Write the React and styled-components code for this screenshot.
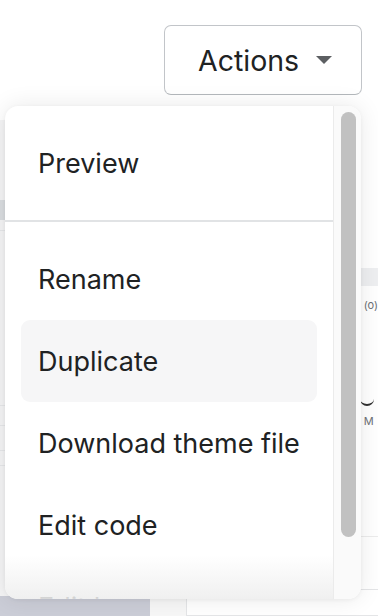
import React, { useState } from 'react';
import styled, { createGlobalStyle } from 'styled-components';

const sections = [
  ['Preview'],
  ['Rename', 'Duplicate', 'Download theme file', 'Edit code', 'Edit languages'],
];

const GlobalStyle = createGlobalStyle`
  html, body {
    margin: 0;
    padding: 0;
    background: #ffffff;
  }
  body {
    font-family: Inter, "Noto Sans", "Liberation Sans", sans-serif;
    color: #202223;
  }
`;

const App = () => {
  const [hovered, setHovered] = useState('Duplicate');

  return (
    <>
      <GlobalStyle />
      <Page>
        <Header>
          <ActionsButton type='button'>
            Actions
            <Caret viewBox='0 0 16 8' aria-hidden='true'>
              <path d='M0 0h16L8 8z' />
            </Caret>
          </ActionsButton>
        </Header>

        {/* the page behind the popover, washed out */}
        <Backdrop>
          <Sidebar>
            <SideBand $top={80} />
            <SideLine $top={110} />
            <SideLine $top={285} />
            <SideLine $top={305} />
            <SideLine $top={330} />
            <SideLine $top={345} />
            <SideFoot />
          </Sidebar>
          <Main>
            <Gutter />
            <Card>
              <CardBand />
              <CardLabel>(o)</CardLabel>
              <CardArc />
              <CardLabel $mt={8}>M</CardLabel>
              <CardRule />
              <Password>Password</Password>
              <InputBox />
            </Card>
          </Main>
        </Backdrop>

        <Popover>
          <List>
            {sections.map((items, i) => (
              <Section key={i} $first={i === 0}>
                {items.map((item) => (
                  <Item
                    key={item}
                    $active={hovered === item}
                    onMouseEnter={() => setHovered(item)}
                  >
                    {item}
                  </Item>
                ))}
              </Section>
            ))}
            <Fade />
          </List>
          <Track>
            <Thumb />
          </Track>
        </Popover>
      </Page>
    </>
  );
};

export default App;

const Page = styled.div`
  position: relative;
  width: 378px;
  height: 616px;
  overflow: hidden;
  background: #ffffff;
`;

const Header = styled.header`
  display: flex;
  justify-content: flex-end;
  height: 120px;
  padding: 25px 16px 0 0;
  box-sizing: border-box;
`;

const ActionsButton = styled.button`
  display: flex;
  align-items: center;
  justify-content: space-between;
  box-sizing: border-box;
  width: 198px;
  height: 70px;
  padding: 0 29px 0 33px;
  background: #ffffff;
  border: 1px solid #c2c5c9;
  border-bottom-color: #b4b8bc;
  border-radius: 7px;
  font-family: Inter, "Noto Sans", "Liberation Sans", sans-serif;
  font-size: 28.5px;
  color: #202223;
  cursor: pointer;
`;

const Caret = styled.svg`
  width: 16px;
  height: 8px;
  fill: #5c5f62;
`;

const Backdrop = styled.div`
  display: flex;
  height: 496px;
`;

const Sidebar = styled.div`
  position: relative;
  width: 150px;
  background: #f4f4f5;
`;

const SideBand = styled.div`
  position: absolute;
  left: 0;
  right: 0;
  top: ${(p) => p.$top}px;
  height: 20px;
  background: #d9dcdf;
`;

const SideLine = styled.div`
  position: absolute;
  left: 0;
  right: 0;
  top: ${(p) => p.$top}px;
  height: 1px;
  background: #e6e7e9;
`;

const SideFoot = styled.div`
  position: absolute;
  left: 0;
  right: 0;
  bottom: 0;
  height: 20px;
  background: #cbcdd7;
`;

const Main = styled.div`
  flex: 1;
  display: flex;
  background: #f7f7f7;
`;

const Gutter = styled.div`
  width: 36px;
`;

const Card = styled.div`
  flex: 1;
  display: flex;
  flex-direction: column;
  background: #ffffff;
  padding-top: 148px;
`;

const CardBand = styled.div`
  height: 18px;
  background: #eeeff1;
  margin-bottom: 12px;
`;

const CardLabel = styled.div`
  font-size: 11px;
  color: #6d7175;
  padding-left: 178px;
  margin-top: ${(p) => p.$mt || 0}px;
`;

const CardArc = styled.div`
  margin: 84px 0 0 174px;
  width: 14px;
  height: 8px;
  border-bottom: 2px solid #303030;
  border-radius: 0 0 10px 10px;
`;

const CardRule = styled.div`
  height: 1px;
  background: #ececec;
  margin-top: 108px;
`;

const Password = styled.div`
  font-size: 8px;
  color: #303030;
  padding-left: 100px;
  margin-top: 40px;
`;

const InputBox = styled.div`
  flex: 1;
  margin-top: 2px;
  border: 1px solid #e4e5e7;
  border-right: none;
  border-radius: 2px 0 0 0;
`;

const Popover = styled.div`
  position: absolute;
  left: 5px;
  top: 106px;
  width: 356px;
  height: 493px;
  display: flex;
  background: #ffffff;
  border-radius: 13px;
  overflow: hidden;
  box-shadow: 0 0 24px rgba(0, 0, 0, 0.09), 0 1px 4px rgba(0, 0, 0, 0.05);
`;

const List = styled.div`
  position: relative;
  width: 328px;
  overflow: hidden;
  border-right: 1px solid #ebebeb;
`;

const Section = styled.ul`
  list-style: none;
  margin: 0;
  padding: 16px;
  border-top: ${(p) => (p.$first ? 'none' : '2px solid #e1e3e5')};
`;

const Item = styled.li`
  display: flex;
  align-items: center;
  height: 82px;
  padding-left: 17px;
  border-radius: 9px;
  font-size: 27px;
  color: #202223;
  background: ${(p) => (p.$active ? '#f6f6f7' : 'transparent')};
  white-space: nowrap;
  cursor: pointer;
`;

const Fade = styled.div`
  position: absolute;
  left: 0;
  right: 0;
  bottom: 0;
  height: 44px;
  background: linear-gradient(rgba(240, 240, 240, 0), rgba(238, 238, 238, 0.9));
`;

const Track = styled.div`
  flex: 1;
  background: #fafafa;
  padding: 6px 0 0 7px;
`;

const Thumb = styled.div`
  width: 15px;
  height: 425px;
  border-radius: 8px;
  background: #c1c1c1;
`;
